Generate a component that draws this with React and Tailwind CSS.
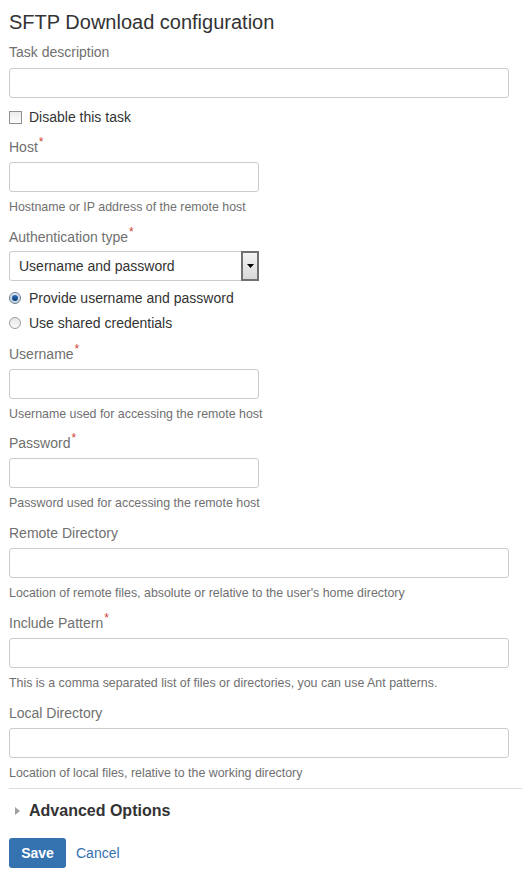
import React from 'react';

const Req = () => <sup className="ml-[1px] text-[12px] text-[#d04437]">*</sup>;

const Field = ({ label, required, help, wide = true, mt = 'mt-[11px]' }) => (
  <div className={mt}>
    <div className="h-5 leading-5 text-[14px] text-[#707070]">
      {label}
      {required && <Req />}
    </div>
    <input
      type="text"
      className={`mt-[5px] block h-[30px] ${wide ? 'w-[500px]' : 'w-[250px]'} rounded-[3px] border border-[#cccccc] bg-white px-2 text-[14px] outline-none`}
    />
    {help && <div className="mt-[7px] h-4 leading-4 text-[12.4px] text-[#707070]">{help}</div>}
  </div>
);

export default function App() {
  return (
    <div className="min-h-[878px] w-[522px] bg-white text-[#333333]" style={{ fontFamily: '"Liberation Sans", Arial, sans-serif' }}>
      <div className="pl-[9px]">
        <h1 className="pt-[10px] text-[20px] leading-[24px] font-normal">SFTP Download configuration</h1>

        <div className="mt-[8px] h-5 leading-5 text-[14px] text-[#707070]">Task description</div>
        <input type="text" className="mt-[6px] block h-[30px] w-[500px] rounded-[3px] border border-[#cccccc] bg-white px-2 outline-none" />

        <label className="mt-[9px] flex h-5 items-center text-[14px]">
          <span className="inline-block h-[13px] w-[13px] border border-[#8f8f8f] bg-gradient-to-b from-[#ececec] to-[#fcfcfc]" />
          <span className="ml-[7px]">Disable this task</span>
        </label>

        <Field label="Host" required wide={false} mt="mt-[10px]" help="Hostname or IP address of the remote host" />

        <div className="mt-[12px] h-5 leading-5 text-[14px] text-[#707070]">
          Authentication type
          <Req />
        </div>
        <div className="mt-[4px] flex h-[30px] w-[250px] items-stretch rounded-[3px] border border-[#cccccc] bg-white">
          <div className="flex flex-1 items-center pl-[9px] text-[14px]">Username and password</div>
          <div className="-my-[1px] -mr-[1px] flex w-[18px] items-center justify-center border-2 border-[#707070] bg-gradient-to-b from-[#f4f4f4] to-[#d8d8d8]">
            <svg width="7" height="4" viewBox="0 0 7 4"><path d="M0 0h7L3.5 4z" fill="#000" /></svg>
          </div>
        </div>

        <label className="mt-[7px] flex h-5 items-center text-[14px]">
          <span className="flex h-[12px] w-[12px] items-center justify-center rounded-full border border-[#6b7f93] bg-gradient-to-b from-[#e2e8ee] to-[#c4d0dc]">
            <span className="h-[6px] w-[6px] rounded-full bg-gradient-to-b from-[#2a6fbf] to-[#0c3e7a]" />
          </span>
          <span className="ml-[8px]">Provide username and password</span>
        </label>
        <label className="mt-[5px] flex h-5 items-center text-[14px]">
          <span className="h-[12px] w-[12px] rounded-full border border-[#9a9a9a] bg-gradient-to-b from-[#e6e6e6] to-[#fafafa]" />
          <span className="ml-[8px]">Use shared credentials</span>
        </label>

        <Field label="Username" required wide={false} help="Username used for accessing the remote host" />
        <Field label="Password" required wide={false} help="Password used for accessing the remote host" />
        <Field label="Remote Directory" mt="mt-[12px]" help="Location of remote files, absolute or relative to the user's home directory" />
        <Field label="Include Pattern" required mt="mt-[12px]" help="This is a comma separated list of files or directories, you can use Ant patterns." />
        <Field label="Local Directory" mt="mt-[12px]" help="Location of local files, relative to the working directory" />
      </div>

      <div className="ml-[9px] mt-[7px] border-t border-[#dddddd]" />

      <div className="pl-[9px]">
        <div className="mt-[12px] flex h-5 items-center">
          <svg width="5" height="8" viewBox="0 0 5 8" className="ml-[6px]"><path d="M0 0l5 4-5 4z" fill="#a0a0a0" /></svg>
          <span className="ml-[9px] text-[16px] font-bold">Advanced Options</span>
        </div>
        <div className="mt-[17px] flex items-center">
          <button className="h-[30px] w-[57px] rounded-[3px] bg-[#3572b0] text-[14px] font-bold text-white">Save</button>
          <a className="ml-[10px] text-[14px] text-[#3572b0]" href="#">Cancel</a>
        </div>
      </div>
    </div>
  );
}
